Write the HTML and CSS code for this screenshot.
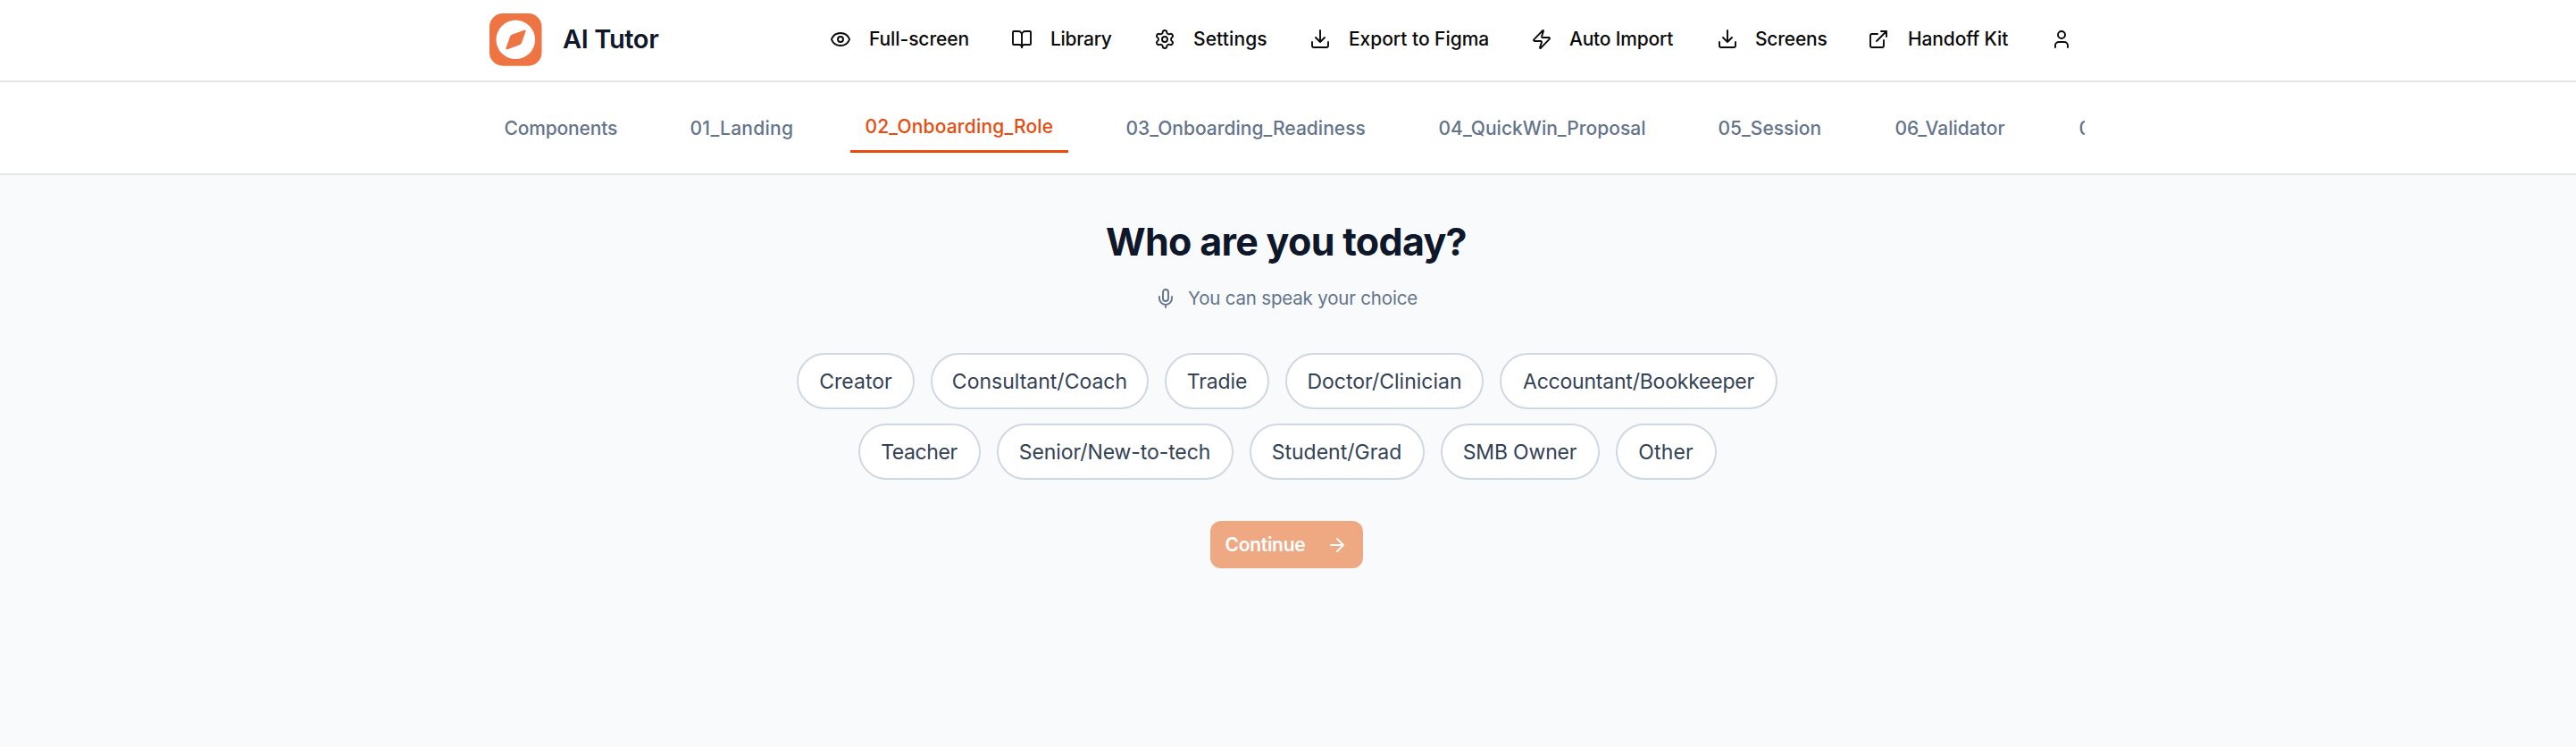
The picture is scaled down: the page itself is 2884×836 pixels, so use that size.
FILE: index.html
```html
<!DOCTYPE html>
<html lang="en">
<head>
<meta charset="utf-8">
<title>AI Tutor</title>
<link rel="stylesheet" href="styles.css">
</head>
<body>
<header class="header">
  <div class="brand">
    <svg class="logo" viewBox="0 0 59 59">
      <rect width="58.5" height="58.7" rx="15" fill="#ef7444"/>
      <circle cx="29.3" cy="29.3" r="21.8" fill="#fff"/>
      <path d="M25 23.8L38.8 18.7Q41.2 18 40.5 20.3L36 33Q35.5 34.3 34.2 34.9L20.3 40.3Q17.8 41 18.5 38.6L23.2 25.4Q23.7 24.3 25 23.8Z" fill="#ef7444"/>
    </svg>
    <span class="brand-name">AI Tutor</span>
  </div>
  <nav class="actions">
    <a class="action action-fullscreen"><svg class="icon" viewBox="0 0 24 24"><path d="M2.06 12.35a1 1 0 0 1 0-.7 10.75 10.75 0 0 1 19.88 0 1 1 0 0 1 0 .7 10.75 10.75 0 0 1-19.88 0"/><circle cx="12" cy="12" r="3"/></svg><span>Full-screen</span></a>
    <a class="action action-library"><svg class="icon" viewBox="0 0 24 24"><path d="M12 7v14"/><path d="M3 18a1 1 0 0 1-1-1V4a1 1 0 0 1 1-1h5a4 4 0 0 1 4 4 4 4 0 0 1 4-4h5a1 1 0 0 1 1 1v13a1 1 0 0 1-1 1h-6a3 3 0 0 0-3 3 3 3 0 0 0-3-3z"/></svg><span>Library</span></a>
    <a class="action action-settings"><svg class="icon" viewBox="0 0 24 24"><path d="M9.671 4.136a2.34 2.34 0 0 1 4.659 0 2.34 2.34 0 0 0 3.319 1.915 2.34 2.34 0 0 1 2.33 4.033 2.34 2.34 0 0 0 0 3.831 2.34 2.34 0 0 1-2.33 4.033 2.34 2.34 0 0 0-3.319 1.915 2.34 2.34 0 0 1-4.659 0 2.34 2.34 0 0 0-3.32-1.915 2.34 2.34 0 0 1-2.33-4.033 2.34 2.34 0 0 0 0-3.831A2.34 2.34 0 0 1 6.35 6.051a2.34 2.34 0 0 0 3.319-1.915"/><circle cx="12" cy="12" r="3"/></svg><span>Settings</span></a>
    <a class="action action-export"><svg class="icon" viewBox="0 0 24 24"><path d="M21 15v4a2 2 0 0 1-2 2H5a2 2 0 0 1-2-2v-4M7 10l5 5 5-5M12 15V2"/></svg><span>Export to Figma</span></a>
    <a class="action action-import"><svg class="icon" viewBox="0 0 24 24"><path d="M4 14a1 1 0 0 1-.78-1.63l9.9-10.2a.5.5 0 0 1 .86.46l-1.92 6.02A1 1 0 0 0 13 10h7a1 1 0 0 1 .78 1.63l-9.9 10.2a.5.5 0 0 1-.86-.46l1.92-6.02A1 1 0 0 0 11 14z"/></svg><span>Auto Import</span></a>
    <a class="action action-screens"><svg class="icon" viewBox="0 0 24 24"><path d="M21 15v4a2 2 0 0 1-2 2H5a2 2 0 0 1-2-2v-4M7 10l5 5 5-5M12 15V2"/></svg><span>Screens</span></a>
    <a class="action action-handoff"><svg class="icon" viewBox="0 0 24 24"><path d="M15 3h6v6M10 14L21 3M18 13v6a2 2 0 0 1-2 2H5a2 2 0 0 1-2-2V8a2 2 0 0 1 2-2h6"/></svg><span>Handoff Kit</span></a>
    <a class="action"><svg class="icon" viewBox="0 0 24 24"><path d="M19 21v-2a4 4 0 0 0-4-4H9a4 4 0 0 0-4 4v2"/><circle cx="12" cy="7" r="4"/></svg></a>
  </nav>
</header>
<div class="tabbar">
  <nav class="tabs">
    <a class="tab tab-components">Components</a>
    <a class="tab tab-landing">01_Landing</a>
    <a class="tab tab-role active">02_Onboarding_Role</a>
    <a class="tab tab-readiness">03_Onboarding_Readiness</a>
    <a class="tab tab-proposal">04_QuickWin_Proposal</a>
    <a class="tab tab-session">05_Session</a>
    <a class="tab tab-validator">06_Validator</a>
    <a class="tab">0</a>
  </nav>
</div>
<main class="main">
  <h1 class="title">Who are you today?</h1>
  <p class="hint"><svg class="icon" viewBox="0 0 24 24"><path d="M12 19v3M19 10v2a7 7 0 0 1-14 0v-2"/><rect x="9" y="2" width="6" height="13" rx="3"/></svg><span>You can speak your choice</span></p>
  <div class="roles">
    <div class="role-row">
      <button class="role creator">Creator</button>
      <button class="role consultant">Consultant/Coach</button>
      <button class="role tradie">Tradie</button>
      <button class="role doctor">Doctor/Clinician</button>
      <button class="role accountant">Accountant/Bookkeeper</button>
    </div>
    <div class="role-row">
      <button class="role teacher">Teacher</button>
      <button class="role senior">Senior/New-to-tech</button>
      <button class="role student">Student/Grad</button>
      <button class="role owner">SMB Owner</button>
      <button class="role other">Other</button>
    </div>
  </div>
  <button class="continue"><span>Continue</span><svg class="icon" viewBox="0 0 24 24"><path d="M5 12h14M12 5l7 7-7 7"/></svg></button>
</main>
</body>
</html>
```
FILE: styles.css
```css
* { box-sizing: border-box; }
body {
  margin: 0;
  min-height: 836px;
  background: #f9fafc;
  color: #0f172a;
  font-family: Inter, "Noto Sans", sans-serif;
}
.icon {
  width: 24px;
  height: 24px;
  flex: none;
  fill: none;
  stroke: currentColor;
  stroke-width: 1.9;
  stroke-linecap: round;
  stroke-linejoin: round;
}

/* Header */
.header {
  display: flex;
  align-items: center;
  height: 92px;
  padding: 0 548px 3px;
  background: #fff;
  border-bottom: 2px solid #e5e5e5;
}
.brand {
  display: flex;
  align-items: center;
  gap: 23px;
  width: 381px;
  flex: none;
}
.logo { width: 59px; height: 59px; flex: none; margin-top: 2px; }
.brand-name {
  font-size: 29px;
  font-weight: 600;
  line-height: 1;
  letter-spacing: -0.38px;
}
.actions { display: flex; flex: none; }
.action {
  display: flex;
  align-items: center;
  gap: 20px;
  color: #0a0a0a;
  font-size: 21px;
  font-weight: 500;
  line-height: 24px;
  white-space: nowrap;
  letter-spacing: -0.09px;
}
.action-fullscreen { width: 203px; }
.action-library { width: 160px; letter-spacing: -0.29px; }
.action-settings { width: 174px; letter-spacing: 0.1px; }
.action-export { width: 248px; letter-spacing: -0.04px; }
.action-import { width: 208px; gap: 19px; letter-spacing: -0.2px; }
.action-screens { width: 169px; gap: 19px; letter-spacing: -0.2px; }
.action-handoff { width: 205px; gap: 21px; letter-spacing: -0.13px; }

/* Screen tabs */
.tabbar {
  height: 104px;
  padding: 0 550px 0 548px;
  background: #fff;
  border-bottom: 2px solid #e5e5e5;
}
.tabs {
  display: flex;
  align-items: center;
  height: 102px;
  padding-top: 2px;
  overflow: hidden;
}
.tab {
  flex: none;
  padding: 13px 0 13px 16.5px;
  color: #64748b;
  font-size: 21px;
  font-weight: 500;
  line-height: 24px;
  white-space: nowrap;
  letter-spacing: 0.02px;
}
.tab-components { width: 208px; letter-spacing: -0.16px; }
.tab-landing { width: 196px; letter-spacing: 0.25px; }
.tab-role { width: 244px; margin-right: 48px; letter-spacing: 0.18px; }
.tab-readiness { width: 350px; }
.tab-proposal { width: 313px; }
.tab-session { width: 198px; }
.tab-validator { width: 206px; }
.tab.active {
  padding-bottom: 14px;
  color: #ea4b0c;
  border-bottom: 3px solid #ea4b0c;
}

/* Role picker */
.main {
  display: flex;
  flex-direction: column;
  align-items: center;
  padding: 49px 4px 0 0;
}
.title {
  margin: 0;
  font-size: 43px;
  font-weight: 700;
  line-height: 50px;
  letter-spacing: -0.7px;
}
.hint {
  display: flex;
  align-items: center;
  gap: 13px;
  margin: 27px 0 0;
  color: #64748b;
  font-size: 20.5px;
  line-height: 24px;
  letter-spacing: -0.19px;
}
.roles {
  display: flex;
  flex-direction: column;
  align-items: center;
  gap: 16px;
  margin-top: 49px;
  padding-left: 2px;
}
.role-row { display: flex; gap: 18px; }
.role {
  height: 63px;
  padding: 0;
  border: 2px solid #cfd8e3;
  border-radius: 32px;
  background: #fff;
  color: #334155;
  font: 400 23px/28px Inter, "Noto Sans", sans-serif;
  white-space: nowrap;
}
.creator { width: 132px; }
.consultant { width: 244px; }
.tradie { width: 117px; letter-spacing: -0.15px; }
.doctor { width: 222px; }
.accountant { width: 311px; letter-spacing: -0.21px; }
.teacher { width: 137px; letter-spacing: -0.4px; }
.senior { width: 265px; letter-spacing: -0.09px; }
.student { width: 196px; }
.owner { width: 178px; letter-spacing: -0.18px; }
.other { width: 113px; letter-spacing: 0.15px; }
.continue {
  display: flex;
  align-items: center;
  justify-content: space-between;
  width: 171px;
  height: 53px;
  margin-top: 46px;
  padding: 0 17px;
  border: 0;
  border-radius: 12px;
  background: #eea882;
  color: #fff;
  font: 600 21px/24px Inter, "Noto Sans", sans-serif;
  letter-spacing: -0.28px;
}
```
